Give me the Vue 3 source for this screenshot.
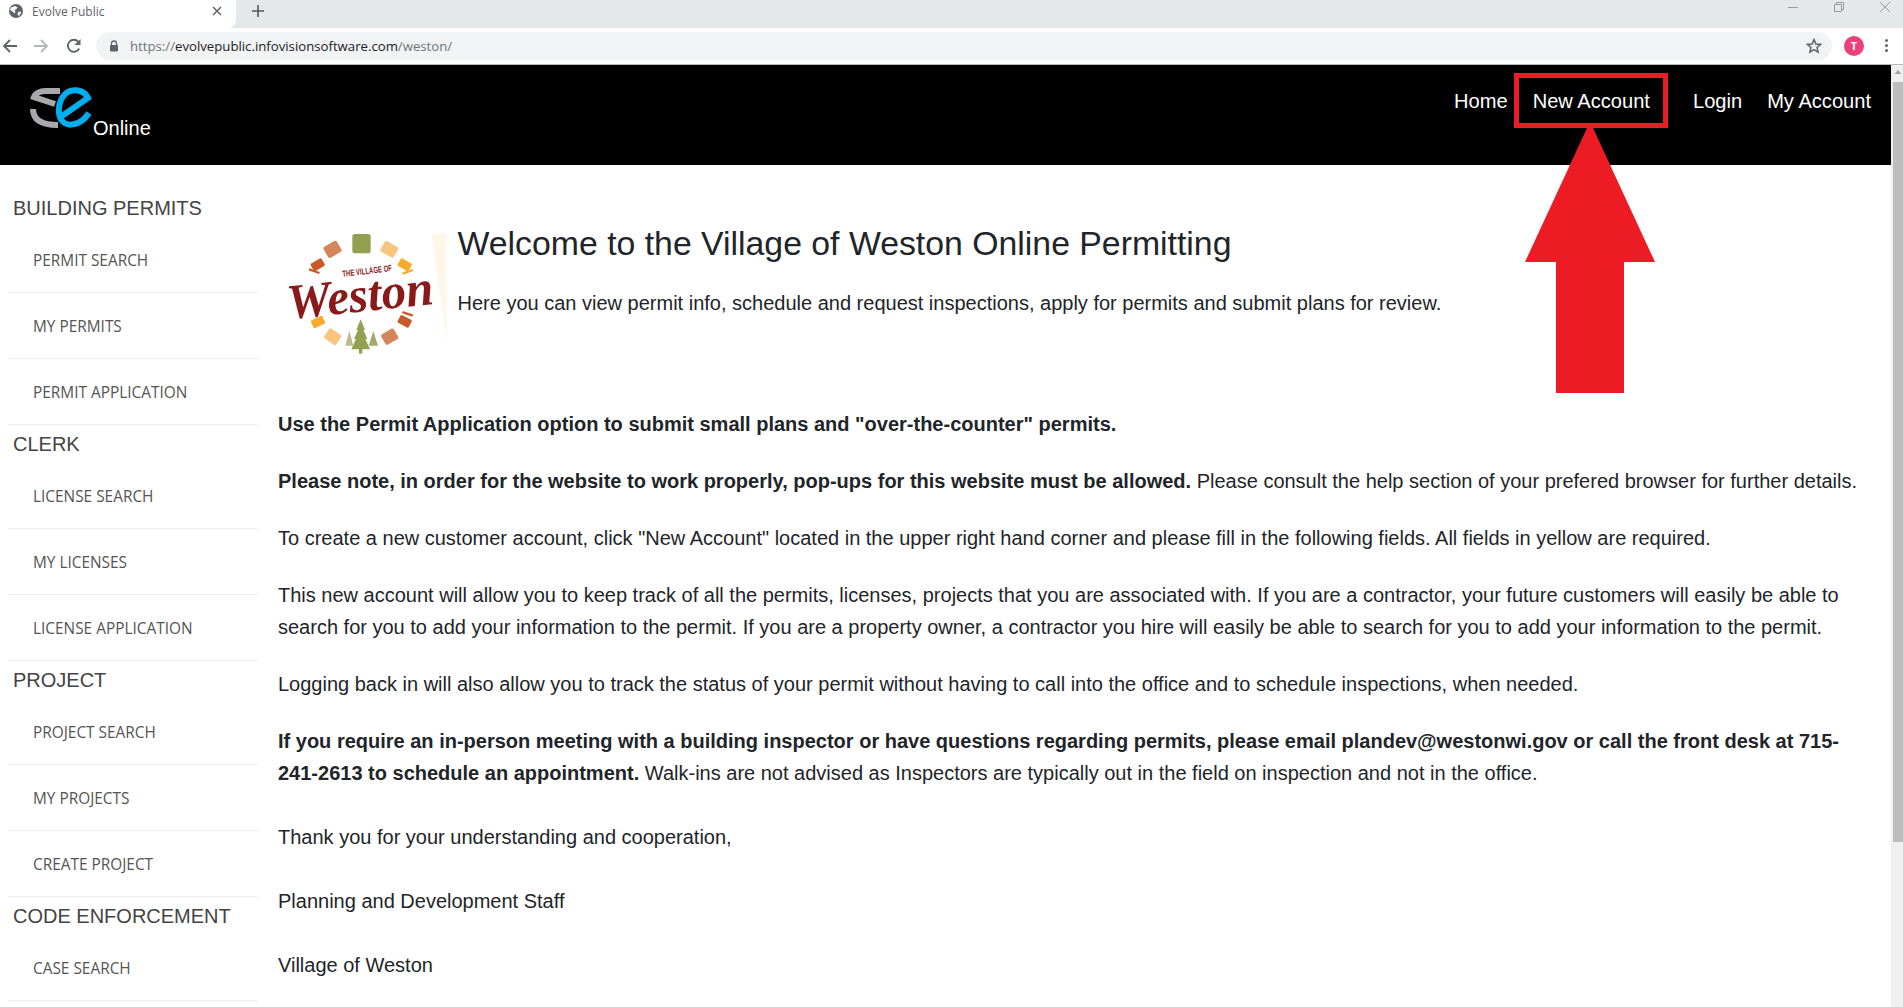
<template>
  <div class="window">
    <div class="tabstrip">
      <div class="tab">
        <svg class="favicon" width="16" height="16" viewBox="0 0 16 16">
          <circle cx="8" cy="8" r="7" fill="#5f6368" />
          <path d="M3 4.5 L7 3 L9.5 4.5 L8 6.5 L6.5 7 L7.5 9 L6.5 10.5 L4.5 8.5 L2 7 Z M10 9 L12.5 8.5 L13 10 L11 13 L9.5 11.5 Z" fill="#fff" />
        </svg>
        <span class="tab-title">Evolve Public</span>
        <svg class="tab-close" width="10" height="10" viewBox="0 0 10 10">
          <path d="M1 1 L9 9 M9 1 L1 9" stroke="#5f6368" stroke-width="1.5" />
        </svg>
      </div>
      <svg class="new-tab" width="14" height="14" viewBox="0 0 14 14">
        <path d="M7 1 V13 M1 7 H13" stroke="#555" stroke-width="1.6" />
      </svg>
      <div class="win-controls">
        <svg width="12" height="12" viewBox="0 0 12 12"><path d="M1 6.5 H11" stroke="#999" /></svg>
        <svg width="12" height="12" viewBox="0 0 12 12"><path d="M1.5 3.5 H8.5 V10.5 H1.5 Z M3.5 3.5 V1.5 H10.5 V8.5 H8.5" stroke="#999" fill="none" /></svg>
        <svg width="12" height="12" viewBox="0 0 12 12"><path d="M1 1 L11 11 M11 1 L1 11" stroke="#999" /></svg>
      </div>
    </div>

    <div class="toolbar">
      <svg class="nav-icon" width="16" height="16" viewBox="0 0 16 16">
        <path d="M15 8 H2 M8 2 L2 8 L8 14" stroke="#5f6368" stroke-width="1.8" fill="none" />
      </svg>
      <svg class="nav-icon forward" width="16" height="16" viewBox="0 0 16 16">
        <path d="M1 8 H14 M8 2 L14 8 L8 14" stroke="#b4b7ba" stroke-width="1.8" fill="none" />
      </svg>
      <svg class="nav-icon reload" width="16" height="16" viewBox="0 0 16 16">
        <path d="M13.2 10.5 A6 6 0 1 1 12.4 3.8" stroke="#5f6368" stroke-width="1.8" fill="none" />
        <path d="M14.5 1 V7 H8.5 Z" fill="#5f6368" />
      </svg>
      <div class="omnibox">
        <svg width="10" height="12" viewBox="0 0 10 12">
          <path d="M2.5 5 V3.5 A2.5 2.5 0 0 1 7.5 3.5 V5" stroke="#5f6368" stroke-width="1.3" fill="none" />
          <rect x="1" y="5" width="8" height="6.5" rx="1" fill="#5f6368" />
        </svg>
        <span class="url"><span class="url-dim">https://</span>evolvepublic.infovisionsoftware.com<span class="url-dim">/weston/</span></span>
        <svg class="star" width="16" height="16" viewBox="0 0 16 16">
          <path d="M8 1.6 L9.9 6 L14.6 6.4 L11 9.5 L12.1 14.2 L8 11.7 L3.9 14.2 L5 9.5 L1.4 6.4 L6.1 6 Z" stroke="#5f6368" stroke-width="1.5" fill="none" />
        </svg>
      </div>
      <div class="avatar">T</div>
      <div class="dots"><i></i><i></i><i></i></div>
    </div>

    <div class="viewport">
      <div class="page">
        <header class="site-header">
          <div class="brand">
            <svg class="brand-logo" width="62" height="44" viewBox="0 0 62 44">
              <path d="M30 4 H16 C9 4 5 7 4 10 L25 17" stroke="#a7a9ac" stroke-width="6" fill="none" />
              <path d="M3 22 C3 33 12 38 28 38" stroke="#a7a9ac" stroke-width="6" fill="none" />
              <path d="M32 29 L58 11 C55 4 47 2 40 4 C32 7 28 17 29 26 C30 36 38 39 44 37 C50 36 55 32 59 26" stroke="#00aeef" stroke-width="6" fill="none" />
            </svg>
            <span class="brand-name">Online</span>
          </div>
          <nav class="site-nav">
            <a>Home</a>
            <a class="nav-new">New Account</a>
            <a>Login</a>
            <a>My Account</a>
          </nav>
        </header>

        <div class="columns">
          <aside class="sidebar">
            <section v-for="group in menu" :key="group.title">
              <h4>{{ group.title }}</h4>
              <a v-for="item in group.items" :key="item" class="side-item">{{ item }}</a>
            </section>
          </aside>

          <main class="content">
            <div class="welcome">
              <svg class="village-logo" width="179" height="150" viewBox="24 0 537 450">
                <polygon points="484,55 530,55 530,380" fill="#fff6ea" />
                <rect x="247" y="57" width="55" height="58" rx="8" fill="#93a04f" />
                <rect x="165" y="84" width="46" height="38" rx="6" fill="#d4865a" transform="rotate(-30 188 104)" />
                <rect x="335" y="85" width="46" height="36" rx="6" fill="#f8c580" transform="rotate(30 358 103)" />
                <rect x="124" y="136" width="38" height="26" rx="4" fill="#c95a28" transform="rotate(-30 143 149)" />
                <rect x="116" y="165" width="34" height="7" rx="3" fill="#c95a28" transform="rotate(20 133 168)" />
                <rect x="385" y="136" width="38" height="26" rx="4" fill="#f7ab2a" transform="rotate(30 404 149)" />
                <rect x="396" y="167" width="34" height="7" rx="3" fill="#f7ab2a" transform="rotate(-20 413 170)" />
                <rect x="125" y="308" width="38" height="26" rx="4" fill="#f7ab2a" transform="rotate(-25 144 321)" />
                <rect x="166" y="347" width="44" height="36" rx="6" fill="#f8c580" transform="rotate(35 188 365)" />
                <rect x="337" y="347" width="44" height="36" rx="6" fill="#d4865a" transform="rotate(-30 359 365)" />
                <rect x="385" y="306" width="38" height="26" rx="4" fill="#c95a28" transform="rotate(28 404 319)" />
                <rect x="396" y="293" width="34" height="7" rx="3" fill="#c95a28" transform="rotate(18 413 296)" />
                <text x="218" y="186" class="logo-small" transform="rotate(-7 218 186)" textLength="150" lengthAdjust="spacingAndGlyphs">THE VILLAGE OF</text>
                <text x="52" y="290" class="logo-script" textLength="440" lengthAdjust="spacingAndGlyphs" transform="rotate(-6 270 260)">Weston</text>
                <path d="M238 347 L250 392 H226 Z" fill="#b9bd8c" />
                <path d="M310 347 L324 392 H296 Z" fill="#a3ab6c" />
                <path d="M272 313 L285 345 L280 345 L292 372 L286 372 L300 403 H244 L258 372 L252 372 L264 345 L259 345 Z" fill="#93a04f" />
                <rect x="267" y="400" width="10" height="16" fill="#93a04f" />
              </svg>
              <div class="welcome-text">
                <h1>Welcome to the Village of Weston Online Permitting</h1>
                <p>Here you can view permit info, schedule and request inspections, apply for permits and submit plans for review.</p>
              </div>
            </div>

            <p><b>Use the Permit Application option to submit small plans and "over-the-counter" permits.</b></p>
            <p><b>Please note, in order for the website to work properly, pop-ups for this website must be allowed.</b> Please consult the help section of your prefered browser for further details.</p>
            <p>To create a new customer account, click "New Account" located in the upper right hand corner and please fill in the following fields. All fields in yellow are required.</p>
            <p>This new account will allow you to keep track of all the permits, licenses, projects that you are associated with. If you are a contractor, your future customers will easily be able to search for you to add your information to the permit. If you are a property owner, a contractor you hire will easily be able to search for you to add your information to the permit.</p>
            <p>Logging back in will also allow you to track the status of your permit without having to call into the office and to schedule inspections, when needed.</p>
            <p class="wide-gap"><b>If you require an in-person meeting with a building inspector or have questions regarding permits, please email plandev@westonwi.gov or call the front desk at 715-241-2613 to schedule an appointment.</b> Walk-ins are not advised as Inspectors are typically out in the field on inspection and not in the office.</p>
            <p class="wide-gap">Thank you for your understanding and cooperation,</p>
            <p class="wide-gap">Planning and Development Staff</p>
            <p>Village of Weston</p>
          </main>
        </div>
      </div>

      <div class="scrollbar">
        <svg class="scroll-up" width="12" height="12" viewBox="0 0 12 12"><path d="M2.5 8 L6 4 L9.5 8 Z" fill="#a3a3a3" /></svg>
        <div class="scroll-thumb"></div>
      </div>

      <!-- red callout drawn over the screenshot -->
      <div class="callout-box"></div>
      <svg class="callout-arrow" width="132" height="266" viewBox="0 0 132 266">
        <path d="M63 0 H69 L131 134 H100 V265 H32 V134 H1 Z" fill="#ed1c24" />
      </svg>
    </div>
  </div>
</template>

<script setup>
const menu = [
  { title: 'BUILDING PERMITS', items: ['PERMIT SEARCH', 'MY PERMITS', 'PERMIT APPLICATION'] },
  { title: 'CLERK', items: ['LICENSE SEARCH', 'MY LICENSES', 'LICENSE APPLICATION'] },
  { title: 'PROJECT', items: ['PROJECT SEARCH', 'MY PROJECTS', 'CREATE PROJECT'] },
  { title: 'CODE ENFORCEMENT', items: ['CASE SEARCH'] }
]
</script>

<style>
html, body {
  margin: 0;
  overflow: hidden;
  background: #fff;
}
</style>

<style scoped>
.window {
  display: flex;
  flex-direction: column;
  height: 1007px;
  overflow: hidden;
  font-family: "Liberation Sans", Arial, sans-serif;
}

.tabstrip {
  display: flex;
  align-items: center;
  height: 28px;
  flex: none;
  background: #e5e8eb;
}
.tab {
  display: flex;
  align-items: center;
  box-sizing: border-box;
  width: 236px;
  height: 28px;
  padding: 0 14px 6px 8px;
  background: #fff;
  border-bottom-right-radius: 8px;
}
.tab-title {
  margin-left: 8px;
  flex: 1;
  font: 12px "Open Sans", sans-serif;
  color: #5f6368;
}
.new-tab {
  margin-left: 15px;
  margin-bottom: 6px;
}
.win-controls {
  display: flex;
  gap: 34px;
  margin-left: auto;
  margin-right: 12px;
  margin-bottom: 14px;
}

.toolbar {
  display: flex;
  align-items: center;
  flex: none;
  box-sizing: border-box;
  height: 37px;
  padding: 0 15px 1px 2px;
  background: #fff;
  border-bottom: 1px solid #b9b9b9;
}
.nav-icon { flex: none; }
.forward { margin-left: 15px; }
.reload { margin-left: 17px; }
.omnibox {
  display: flex;
  align-items: center;
  flex: 1;
  height: 28px;
  margin-left: 14px;
  padding: 0 10px 0 13px;
  background: #f1f3f4;
  border-radius: 14px;
}
.url {
  margin-left: 11px;
  flex: 1;
  font: 13.2px "Open Sans", sans-serif;
  color: #202124;
}
.url-dim { color: #6f7377; }
.avatar {
  width: 20px;
  height: 20px;
  margin-left: 12px;
  border-radius: 50%;
  background: #ec407a;
  color: #fff;
  font: bold 11px/20px "Open Sans", sans-serif;
  text-align: center;
}
.dots {
  display: flex;
  flex-direction: column;
  gap: 2px;
  margin-left: 21px;
}
.dots i {
  display: block;
  width: 3px;
  height: 3px;
  border-radius: 50%;
  background: #5f6368;
}

.viewport {
  position: relative;
  display: flex;
  flex: 1;
  min-height: 0;
}
.page {
  flex: 1;
  min-width: 0;
}

.site-header {
  display: flex;
  justify-content: space-between;
  box-sizing: border-box;
  height: 100px;
  padding: 0 20px 0 30px;
  background: #000;
  color: #fff;
  font-size: 20px;
}
.brand {
  display: flex;
  align-items: flex-end;
  padding-bottom: 25px;
}
.brand-logo {
  align-self: flex-start;
  margin-top: 22px;
  flex: none;
}
.brand-name {
  margin-left: 1px;
  line-height: 23px;
}
.site-nav {
  display: flex;
  gap: 25px;
  padding-top: 25px;
  font-size: 20.1px;
  line-height: 23px;
}
.nav-new { margin-right: 18px; }

.columns { display: flex; }

.sidebar {
  flex: none;
  width: 250px;
  margin-left: 8px;
  padding-top: 24px;
}
.sidebar h4 {
  margin: 0;
  padding-left: 5px;
  height: 38px;
  font-weight: 400;
  font-size: 20px;
  line-height: 38px;
  color: #444;
}
.side-item {
  display: block;
  box-sizing: border-box;
  height: 66px;
  padding: 24px 0 0 25px;
  border-bottom: 1px solid #eee;
  font: 15.4px/19px "Open Sans", sans-serif;
  color: #555;
}

.content {
  flex: 1;
  min-width: 0;
  padding: 50px 20px 0 20px;
  color: #212529;
  font-size: 20px;
  line-height: 32px;
}
.content p {
  margin: 0 0 25px;
}
.content p.wide-gap {
  margin-bottom: 32px;
}
.welcome {
  display: flex;
  height: 150px;
  margin-bottom: 43px;
}
.village-logo { flex: none; }
.welcome-text {
  flex: 1;
  margin-left: 0.5px;
}
.welcome-text h1 {
  margin: 7px 0 22px;
  font-weight: 400;
  font-size: 33.8px;
  line-height: 43px;
}
.logo-small {
  font: bold 27px "Liberation Sans Narrow", "Liberation Sans", sans-serif;
  fill: #8a1a1a;
}
.logo-script {
  font: italic bold 150px "Liberation Serif", serif;
  fill: #8a1a1a;
}

.scrollbar {
  position: relative;
  flex: none;
  width: 12px;
  background: #f0f0f0;
}
.scroll-up {
  display: block;
  margin-left: 1px;
  margin-top: 1px;
}
.scroll-thumb {
  width: 10px;
  height: 760px;
  margin: 4px 0 0 2px;
  background: #bdbdbd;
}

.callout-box {
  position: absolute;
  left: 1514px;
  top: 8px;
  width: 154px;
  height: 55px;
  box-sizing: border-box;
  border: 5px solid #ed1c24;
}
.callout-arrow {
  position: absolute;
  left: 1524px;
  top: 63px;
}
</style>
